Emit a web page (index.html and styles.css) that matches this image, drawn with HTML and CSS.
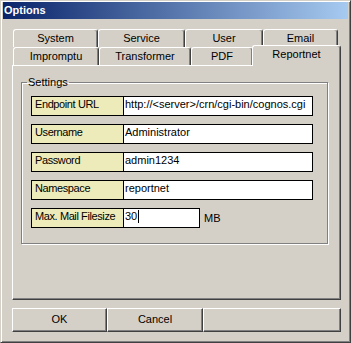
FILE: index.html
```html
<!DOCTYPE html>
<html>

<head>
    <link rel="stylesheet" href="styles.css">
</head>

<body>
    <div class="window">
        <div class="titlebar">Options</div>
        <div class="content">
            <div class="tabs">
                <div class="tab-row">
                    <div class="tab tab-system">System</div>
                    <div class="tab tab-service">Service</div>
                    <div class="tab tab-user">User</div>
                    <div class="tab tab-email">Email</div>
                </div>
                <div class="tab-row">
                    <div class="tab tab-impromptu">Impromptu</div>
                    <div class="tab tab-transformer">Transformer</div>
                    <div class="tab tab-pdf">PDF</div>
                    <div class="tab tab-reportnet selected">Reportnet</div>
                </div>
            </div>

            <div class="panel">
                <fieldset class="group">
                    <legend>Settings</legend>
                    <div class="field">
                        <div class="label">Endpoint URL</div>
                        <div class="value">http://&lt;server&gt;/crn/cgi-bin/cognos.cgi</div>
                    </div>
                    <div class="field">
                        <div class="label">Username</div>
                        <div class="value">Administrator</div>
                    </div>
                    <div class="field">
                        <div class="label">Password</div>
                        <div class="value">admin1234</div>
                    </div>
                    <div class="field">
                        <div class="label">Namespace</div>
                        <div class="value">reportnet</div>
                    </div>
                    <div class="field">
                        <div class="label">Max. Mail Filesize</div>
                        <div class="value value-short">30<span class="caret"></span></div>
                        <div class="unit">MB</div>
                    </div>
                </fieldset>
            </div>

            <div class="buttons">
                <div class="button btn-ok">OK</div>
                <div class="button btn-cancel">Cancel</div>
                <div class="button btn-blank"></div>
            </div>
        </div>
    </div>
</body>

</html>
```

FILE: styles.css
```css
* {
    box-sizing: border-box;
}

body {
    margin: 0;
    background-color: #D4D0C8;
    font-family: "Liberation Sans", Arial, sans-serif;
    font-size: 11px;
    color: #000;
}

.window {
    width: 351px;
    height: 343px;
    background-color: #D4D0C8;
    border: 1px solid;
    border-color: #D4D0C8 #404040 #404040 #D4D0C8;
    box-shadow: inset 1px 1px #fff, inset -1px -1px #808080;
    padding: 1px 2px 2px 2px;
}

.titlebar {
    height: 17px;
    line-height: 17px;
    padding-left: 1px;
    font-weight: bold;
    color: #fff;
    background: linear-gradient(to right, #0A246A, #A6CAF0);
}

.content {
    padding: 10px 7px 0 9px;
}

/* tabs */
.tabs {
    margin-left: 1px;
}

.tab-row {
    display: flex;
    height: 18px;
}

.tab {
    height: 18px;
    line-height: 17px;
    text-align: center;
    border-top: 1px solid #fff;
    border-left: 1px solid #fff;
    border-right: 1px solid #404040;
    box-shadow: inset -1px 0 #808080;
    border-radius: 3px 3px 0 0;
    background-color: #D4D0C8;
}

.tab-system { width: 85px; }
.tab-service { width: 87px; }
.tab-user { width: 78px; }
.tab-email { width: 75px; }

.tab-impromptu { width: 86px; }
.tab-transformer { width: 92px; }
.tab-pdf { width: 62px; }
.tab-reportnet { width: 86px; }

.tab.selected {
    position: relative;
    z-index: 1;
    width: 89px;
    height: 21px;
    margin-top: -2px;
    margin-left: -1px;
    line-height: 17px;
}

/* panel */
.panel {
    width: 329px;
    height: 235px;
    border: 1px solid;
    border-color: #fff #404040 #404040 #fff;
    box-shadow: inset -1px -1px #808080;
}

.group {
    width: 307px;
    margin: 10px 0 0 8px;
    padding: 7px 0 15px 9px;
    border: 1px solid #808080;
    box-shadow: 1px 1px 0 #fff, inset 1px 1px 0 #fff;
}

.group legend {
    margin-left: -4px;
    padding: 0 1px;
    line-height: 13px;
}

.field {
    display: flex;
    height: 20px;
}

.field + .field {
    margin-top: 8px;
}

.label {
    width: 93px;
    padding-left: 3px;
    line-height: 14px;
    letter-spacing: -0.4px;
    border: 1px solid #000;
    background-color: #EEEBBB;
    white-space: nowrap;
}

.value {
    width: 190px;
    margin-left: -1px;
    padding-left: 1px;
    line-height: 14px;
    border: 1px solid #000;
    background-color: #fff;
    white-space: nowrap;
    overflow: hidden;
}

.value-short {
    width: 77px;
}

.caret {
    display: inline-block;
    width: 1px;
    height: 13px;
    margin-left: 1px;
    vertical-align: -3px;
    background-color: #000;
}

.unit {
    margin-left: 4px;
    line-height: 20px;
}

/* buttons */
.buttons {
    display: flex;
    width: 329px;
    height: 24px;
    margin-top: 8px;
}

.button {
    height: 24px;
    line-height: 21px;
    text-align: center;
    border: 1px solid;
    border-color: #fff #404040 #404040 #fff;
    box-shadow: inset -1px -1px #808080;
}

.btn-ok { width: 95px; }
.btn-cancel { width: 96px; }
.btn-blank { width: 138px; }
```
